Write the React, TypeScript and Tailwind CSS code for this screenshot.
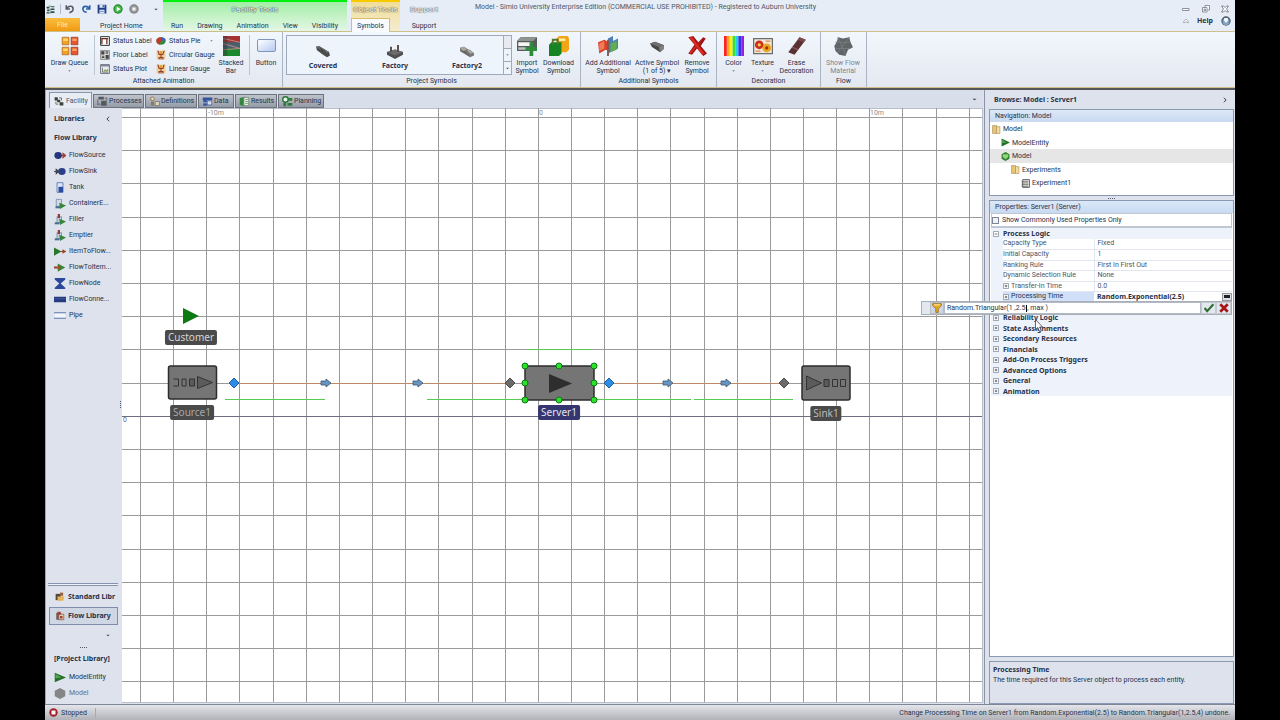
import React from "react";

type Kids = { children?: React.ReactNode };

/* ---------- icons ---------- */

function Ico({ name, className }: { name: string; className?: string }) {
  const art: Record<string, React.ReactNode> = {
    app: <><path d="M1 3h5v3H1zM9 2h6v2H9zM8 6h7v3H8zM2 8h4v3H2zM8 11h7v3H8zM1 13h5v2H1z" fill="#2c4a44" /><path d="M5 2h4M5 9h4M6 14h4" stroke="#4c8a5c" strokeWidth="1.5" /></>,
    undo: <path d="M2 2v6h6M3 7c3-5 10-4 10 1 0 3-3 5-6 6" fill="none" stroke="#555a66" strokeWidth="2.4" />,
    redo: <path d="M14 2v6H8M13 7C10 2 3 3 3 8c0 3 3 5 6 5" fill="none" stroke="#2b62a8" strokeWidth="2.6" />,
    save: <><path d="M1 1h13l1 1v13H1z" fill="#1d3f8c" /><path d="M4 1h8v5H4zM4 9h8v6H4z" fill="#dfe8f7" /><path d="M9 2h2v3H9zM5 11h6v1H5z" fill="#1d3f8c" /></>,
    play: <><circle cx="8" cy="8" r="7.5" fill="#1f8f2a" /><circle cx="8" cy="8" r="5.6" fill="#46b64a" /><path d="M6 4l6 4-6 4z" fill="#fff" /></>,
    stop: <><circle cx="8" cy="8" r="7.5" fill="#808080" /><circle cx="8" cy="8" r="5.6" fill="#9b9b9b" /><path d="M5.500 5.500h5v5h-5z" fill="#f4f4f4" /></>,
    statusLabel: <><path d="M1 1h14v14H1z" fill="#fff" stroke="#333" strokeWidth="1.6" /><path d="M3 3v10M3 4h5M11 3v10M8 4h5" stroke="#6b2b22" strokeWidth="2" /></>,
    floorLabel: <><path d="M1 1h14v14H1z" fill="#d8d8d8" stroke="#555" /><path d="M2 2h5v5H2zM9 8h5v6H9z" fill="#444" /><path d="M9 3h4M9 5h4M3 10h4M3 12h4" stroke="#333" strokeWidth="1.4" /></>,
    statusPlot: <><path d="M1 1h14v14H1z" fill="#e9edf1" stroke="#56606b" strokeWidth="1.4" /><path d="M1 1h14v3H1z" fill="#7b8794" /><path d="M4 6v7h9" stroke="#444" fill="none" /><path d="M5 12l3-4 2 2 3-3v5z" fill="#8aa65a" /></>,
    pie: <><ellipse cx="8" cy="8" rx="7.500" ry="6" fill="#38883c" /><path d="M8 8V2C3 2 0 5 .6 8c0 3 2 5 5 5.800z" fill="#c23a2a" /><path d="M8 8l7.500-1c0-3-4-5-7.500-5z" fill="#3a62b8" /></>,
    gauge: <><path d="M1 1h14v14H1z" fill="#efcf94" /><path d="M3 1l2 6h6l2-6M8 6v9M4 12h8M5 15v-4M11 15v-4" stroke="#93402f" strokeWidth="1.800" fill="none" /><path d="M6 2h4v4H6z" fill="#e79a2d" /></>,
    queue: <><path d="M1 1h6v6H1zM1 9h6v6H1z" fill="#f2a11f" stroke="#a8672a" strokeWidth=".6" /><path d="M9 1h6v6H9zM9 9h6v6H9z" fill="#e8542b" stroke="#8e3323" strokeWidth=".6" /><path d="M2 2h4v2H2zM2 10h4v2H2z" fill="#ffd568" /><path d="M10 2h4v2h-4zM10 10h4v2h-4z" fill="#fb9a62" /></>,
    stacked: <><path d="M0 0h16v6H0z" fill="#a33230" /><path d="M0 5h16v6H0z" fill="#49606d" /><path d="M0 10h16v6H0z" fill="#188a2d" /><path d="M0 2l16 3M0 6l16 4M0 11l16-1" stroke="#c98a86" strokeWidth=".8" /><path d="M0 0h4v16H0z" fill="#303a3f" opacity=".45" /></>,
    covered: <><path d="M1 2l3-1 4 3 6 4 1 4-3 2-4-3-6-5z" fill="#4b4b4b" /><path d="M1 2l3-1 10 7-3 1z" fill="#6f6f6f" /><path d="M5 3l3 4M8 5l3 4" stroke="#333" /></>,
    factory: <><path d="M0 8l8-3 8 3v3l-8 5-8-5z" fill="#4f4f4f" /><path d="M0 8l8-3 8 3-8 4z" fill="#6c6c6c" /><path d="M3 2h2v6H3zM10 0h2v8h-2z" fill="#5e514c" /></>,
    factory2: <><path d="M1 3l4-1 10 7v3l-4 2L1 7z" fill="#777" /><path d="M1 3l4-1 3 3-4 2zM8 6l3-1 4 4-4 1z" fill="#a8a6a0" /><path d="M3 7l3 1 4 4" stroke="#555" fill="none" /></>,
    importS: <><path d="M0 4l3-3h13v8l-3 3H0z" fill="#565c59" /><path d="M0 4l3-3h13l-3 3z" fill="#8d9491" /><path d="M1 5h10v3H1z" fill="#f4f5f4" /><path d="M1 9h6v2H1z" fill="#b9c2bf" /><path d="M10 5h3v4h3v3h-3v4h-3v-4H7V9h3z" fill="#2f8a3c" /></>,
    download: <><path d="M6 2l2-2h7l1 2v9l-2 2H6z" fill="#f3a517" /><path d="M8 2h5v2H8z" fill="#fff1a8" /><path d="M0 7l2-2h8v9l-2 2H0z" fill="#168424" /><path d="M3 7V3h4v4" stroke="#55782e" fill="none" strokeWidth="1.500" /></>,
    addl: <><path d="M8 2l4-2v4l4-2v8l-4 2-4 2z" fill="#4b7fb8" /><path d="M10 6l5-2v7l-5 2z" fill="#62ad50" /><path d="M0 5l5-2 4 2v7l-3-1-5 3z" fill="#d8432c" /><path d="M1 6l4-2v6l-4 2z" fill="#f07b58" /><path d="M8 3v13" stroke="#7a5a50" strokeWidth="1.500" /></>,
    active: <><path d="M1 5l5-2 9 4v4l-4 4L3 9z" fill="#484848" /><path d="M1 5l5-2 9 4-5 2z" fill="#6f6f6f" /><path d="M10 9l5-2v4l-4 4z" fill="#808080" /></>,
    remove: <><path d="M1 1l4-1 4 5 4-4 2 1-4 6 5 6-3 2-5-6-4 5-3-1 5-7z" fill="#9e1515" /><path d="M2 1l2 0 10 13-2 1zM13 2L3 14l-1-1z" fill="#e12a20" /></>,
    color: <><path d="M0 0h2.300v16H0z" fill="#ff2222" /><path d="M2.300 0h2.300v16H2.300z" fill="#ffa51e" /><path d="M4.600 0h2.300v16H4.600z" fill="#fff01f" /><path d="M6.900 0h2.300v16H6.900z" fill="#38e03b" /><path d="M9.200 0h2.300v16H9.200z" fill="#23cdf2" /><path d="M11.500 0h2.300v16h-2.300z" fill="#3333e9" /><path d="M13.800 0H16v16h-2.200z" fill="#9b1be2" /></>,
    texture: <><path d="M.5 2h15v12H.5z" fill="#f2e8de" stroke="#6c6c6c" /><circle cx="5" cy="7" r="3.500" fill="#cc2e1d" /><circle cx="11" cy="9.500" r="3.500" fill="#eba41c" /><circle cx="5" cy="7" r="1.300" fill="#f9d04d" /><circle cx="11" cy="9.500" r="1.300" fill="#a52e17" /><path d="M10 4h4M2 12h4" stroke="#d9884c" /></>,
    erase: <><path d="M10 1l5 2-9 12-5-2z" fill="#593133" /><path d="M10 1l5 2-1.500 2-5-2z" fill="#7c4c4c" /><path d="M4 9l5 2" stroke="#8d5d5d" /></>,
    flow: <><path d="M4 1l4 1 5-1 1 4 2 4-4 2-2 5-5-1-3-3-1-4 2-3z" fill="#626568" /><path d="M2 5l12 0M4 1l6 14M13 1L4 13M2 10h12" stroke="#767a7e" strokeWidth=".8" /></>,
    facility: <><path d="M1 2h5v5H1zM5 6h5v4H5zM9 10h6v5H9z" fill="#3c4238" /><path d="M8 3h4v4M3 9v4h4" stroke="#69705f" fill="none" strokeWidth="1.500" /></>,
    processes: <><path d="M2 1h8v4H2zM6 7h8v7H6z" fill="#545a5e" /><path d="M1 5v7h4M11 3h3v4" stroke="#757b80" fill="none" strokeWidth="2" /></>,
    definitions: <><circle cx="5" cy="4" r="2.600" fill="#f0dcb8" stroke="#8a6a42" strokeWidth="1.200" /><path d="M3 14V8h4v6z" fill="#88785e" /><path d="M9 8h6v6H9z" fill="#ddd6bd" stroke="#6b6b60" /></>,
    data: <><path d="M1 2h14v4H1zM2 6h5v8H2z" fill="#35549b" /><path d="M8 7h6v6H8z" fill="#dce3f3" stroke="#35549b" /><path d="M1 10h13" stroke="#c5d0e8" /></>,
    results: <><path d="M1 3l8-2v14l-8-2z" fill="#328440" /><path d="M7 2h7v12H7z" fill="#e5ece3" stroke="#68806a" /><path d="M9 5h4M9 8h4M9 11h4" stroke="#3b8c46" /></>,
    planning: <><circle cx="5" cy="5" r="4" fill="#eaf4e8" stroke="#257633" strokeWidth="2" /><path d="M9 3h6v4H9zM8 10h7v4H8zM2 10h4v5H2z" fill="#2f7a3d" /></>,
    flowSource: <><path d="M8 8h7M12 5l3.500 3-3.500 3z" fill="#a34234" stroke="#a34234" strokeWidth="1.600" /><circle cx="5.500" cy="8" r="5" fill="#24347e" /></>,
    flowSink: <><path d="M0 8h6M3 5l3.500 3L3 11z" fill="#444" stroke="#444" strokeWidth="1.600" /><circle cx="10.500" cy="8" r="5" fill="#2c3e88" /></>,
    tank: <><path d="M4 1h8v14H4z" fill="#dbe7f7" stroke="#42629b" /><path d="M6 7h6v8H6z" fill="#2b4aa0" /></>,
    container: <><path d="M3 2h7v10H3z" fill="#cfdbe6" stroke="#67819a" /><path d="M7 7l9 4-8 5z" fill="#35853b" /><path d="M2 12h6v3H2z" fill="#4a6b92" /></>,
    filler: <><path d="M4 4h6v9H4z" fill="#c6d3df" stroke="#5f7e9b" /><path d="M5 0h3v6H5z" fill="#8e3f31" /><path d="M7 7l9 4-8 5z" fill="#35853b" /><path d="M1 12h6v3H1z" fill="#4a6b92" /></>,
    itemToFlow: <><path d="M0 2l10 6-10 6z" fill="#2b772c" /><path d="M9 8h6M12 6l3 2-3 2z" fill="#99432b" stroke="#99432b" strokeWidth="1.500" /></>,
    flowToItem: <><path d="M0 8h5" stroke="#93442f" strokeWidth="3" /><path d="M5 2l10 6-10 6z" fill="#3a8533" /><path d="M5 5l4 3-4 3z" fill="#a7452d" /></>,
    flowNode: <path d="M1 0h14v2l-6 6 6 6v2H1v-2l6-6-6-6z" fill="#2b489b" />,
    flowConn: <><path d="M0 4h16v8H0z" fill="#24397f" /><path d="M0 7h16" stroke="#4c64a8" /></>,
    pipe: <><path d="M1 4h14v8H1z" fill="#f2f5fb" /><path d="M0 4h16M0 12h16" stroke="#5c78ab" strokeWidth="1.600" /></>,
    entity: <><path d="M1 1l15 7-15 7z" fill="#24702a" /><path d="M2 3l8 5-8 1z" fill="#57a652" /></>,
    modelGray: <path d="M8 0l7 4v8l-7 4-7-4V4z" fill="#858585" />,
    modelGreen: <><path d="M8 0l7 4v8l-7 4-7-4V4z" fill="#2f7e2f" /><path d="M3 4h10v5l-5 4-5-4z" fill="#8fd678" /></>,
    folder: <><path d="M1 1h7v14H1z" fill="#e9c574" stroke="#a1844a" /><path d="M8 3h6v12H8z" fill="#f5dda0" stroke="#a1844a" /></>,
    experiment: <><path d="M3 1h12v14H3z" fill="#ececec" stroke="#555" strokeWidth="1.500" /><path d="M1 4h12M1 7h12M1 10h12M1 13h12" stroke="#555" strokeWidth="1.300" /></>,
    libStd: <><path d="M1 3h8v10H1z" fill="#57493a" /><path d="M4 7h11l-2 7H4z" fill="#e7b455" /><path d="M8 1h5v5H8z" fill="#995f3f" /></>,
    libFlow: <><path d="M2 3h8v11H2z" fill="#6c5d56" /><path d="M6 5h8v9H6z" fill="#e2cfb5" stroke="#7b4a3a" /><path d="M4 1h5v5H4zM8 8h4v4H8z" fill="#a8402f" /></>,
    stopped: <><circle cx="8" cy="8" r="7.500" fill="#a3202c" /><path d="M4.500 4.500h7v7h-7z" fill="#fff" /></>,
    help: <><circle cx="8" cy="8" r="7.500" fill="#4a5f78" /><circle cx="8" cy="9" r="5.500" fill="#84a3c1" /><path d="M5 3h6v4l-3 4-3-4z" fill="#f4f8fc" /></>,
    funnel: <><path d="M1 1h14v3l-5 5v6H6V9L1 4z" fill="#e9a720" stroke="#936515" strokeWidth="1.200" /><path d="M3 2h10v2H3z" fill="#ffe38a" /></>,
    check: <path d="M1 8l4 5L15 2" stroke="#2f6f31" strokeWidth="3.400" fill="none" />,
    cross: <path d="M2 2l12 12M14 2L2 14" stroke="#a51717" strokeWidth="4.400" fill="none" />,
    min: <path d="M1 7h13v4H1z" fill="#fff" stroke="#6c7480" strokeWidth="1.500" />,
    restore: <path d="M6 5V1h9v9h-4M1 5h9v9H1zM4 8h3v3H4z" fill="#fff" stroke="#6c7480" strokeWidth="1.500" />,
    close: <path d="M1 2h4l3 3 3-3h4l-4 6 4 6h-4l-3-3-3 3H1l4-6z" fill="#fff" stroke="#5c6470" strokeWidth="1.500" />,
    up: <path d="M2 9l6-6 6 6v4l-6-3-6 3z" fill="#fff" stroke="#6c7480" strokeWidth="1.500" />,
    down: <path d="M1 4h14l-7 8z" fill="#3c4656" />,
    left: <path d="M11 2L5 8l6 6" stroke="#2b3b56" strokeWidth="2.600" fill="none" />,
    right: <path d="M5 2l6 6-6 6" stroke="#2b3b56" strokeWidth="2.600" fill="none" />,
  };
  return (
    <svg viewBox="0 0 16 16" preserveAspectRatio="none" aria-hidden="true" className={"shrink-0 " + (className ?? "size-[10px]")}>
      {art[name]}
    </svg>
  );
}

function Grip({ className }: { className: string }) {
  return (
    <div className={"flex items-center justify-center gap-px " + className}>
      {[0, 1, 2, 3].map((i) => <span key={i} className="size-px bg-[#4d586b]" />)}
    </div>
  );
}

/* ---------- title bar ---------- */

function QuickAccess() {
  const items = ["undo", "redo", "save", "play", "stop"];
  return (
    <div className="flex h-[18px] items-center pl-px">
      <Ico name="app" className="size-[9px]" />
      <span className="ml-[5px] h-[10px] w-px bg-[#b3bac6]" />
      <div className="ml-1 flex gap-[6px]">
        {items.map((n) => (
          <button key={n} aria-label={n} className="block"><Ico name={n} /></button>
        ))}
      </div>
      <button aria-label="Customize" className="ml-[15px]"><Ico name="down" className="h-[3px] w-1" /></button>
    </div>
  );
}

function Tab({ children }: Kids) {
  return <button className="h-[14px] leading-4 text-[#26324a]">{children}</button>;
}

function TitleBar() {
  return (
    <header className="flex h-8 border-b border-[#cdbf8a] bg-[#e6edf6]">
      <div className="w-[118px] shrink-0">
        <QuickAccess />
        <div className="flex h-[13px]">
          <button className="h-[13px] w-[35px] bg-linear-to-b from-[#f9bd3c] to-[#f09a10] leading-[14px] text-[#ffe9b0]">File</button>
          <button className="ml-5 h-[14px] w-[42px] text-center leading-4 whitespace-nowrap text-[#26324a]">Project Home</button>
        </div>
      </div>
      <div className="w-[184px] shrink-0 border-t-2 border-[#00f010] bg-linear-to-b from-[#a2eea6] to-[#e4f6e6]">
        <div className="h-4 text-center text-[8px] leading-4 text-white [text-shadow:0_0_1px_#3c5a40,0_0_1px_#3c5a40,0_0_1px_#3c5a40]">Facility Tools</div>
        <div className="flex justify-between pr-[9px] pl-2">
          <Tab>Run</Tab><Tab>Drawing</Tab><Tab>Animation</Tab><Tab>View</Tab><Tab>Visibility</Tab>
        </div>
      </div>
      <div className="ml-1 w-[49px] shrink-0 border-t-2 border-[#f8cb00] bg-linear-to-b from-[#f0dd98] to-[#f4ecd0]">
        <div className="h-4 text-center text-[8px] leading-4 whitespace-nowrap text-white [text-shadow:0_0_1px_#6a5c3a,0_0_1px_#6a5c3a,0_0_1px_#6a5c3a]">Object Tools</div>
        <button className="block h-[14px] w-[39px] border border-b-0 border-[#d9bf62] bg-[#f8fafd] text-[#26324a]">Symbols</button>
      </div>
      <div className="w-12 shrink-0 pt-0.5 text-center">
        <div className="h-4 text-[8px] leading-4 text-white [text-shadow:0_0_1px_#5a6470,0_0_1px_#5a6470,0_0_1px_#5a6470]">Support</div>
        <Tab>Support</Tab>
      </div>
      <h1 className="ml-[27px] flex-1 pt-px leading-3 whitespace-nowrap text-[#4d5768]">
        Model - Simio University Enterprise Edition (COMMERCIAL USE PROHIBITED) - Registered to Auburn University
      </h1>
      <div className="flex w-[60px] shrink-0 flex-col pt-[5px]">
        <div className="flex items-center justify-between pr-[6px] pl-[7px]">
          <button aria-label="Minimize"><Ico name="min" className="size-2" /></button>
          <button aria-label="Restore"><Ico name="restore" className="size-2" /></button>
          <button aria-label="Close"><Ico name="close" className="size-2" /></button>
        </div>
        <div className="mt-[3px] flex items-center justify-between pr-1 pl-2">
          <button aria-label="Collapse ribbon"><Ico name="up" className="size-[6px]" /></button>
          <button className="leading-[10px] font-bold text-[#24344f]">Help</button>
          <Ico name="help" />
        </div>
      </div>
    </header>
  );
}

/* ---------- ribbon ---------- */

function Group({ title, width, children }: Kids & { title: string; width: string }) {
  return (
    <section className={"flex shrink-0 flex-col border-r border-[#a9b3c2] " + width}>
      <div className="flex h-[45px]">{children}</div>
      <h2 className="text-center leading-[11px] text-[#26324a]">{title}</h2>
    </section>
  );
}

function Big({ icon, lines, width, arrow, dim, iconClass }: { icon: string; lines: string[]; width: string; arrow?: boolean; dim?: boolean; iconClass?: string }) {
  return (
    <button className={"flex shrink-0 flex-col items-center pt-1 leading-2 whitespace-nowrap " + width + (dim ? " text-[#7d8590]" : " text-[#26324a]")}>
      <span className="mb-[3px] flex h-5 items-center"><Ico name={icon} className={iconClass ?? "size-5"} /></span>
      {lines.map((l) => <span key={l}>{l}</span>)}
      {arrow && <Ico name="down" className="mt-[3px] h-[2px] w-[3px]" />}
    </button>
  );
}

function Small({ icon, label, arrow }: { icon: string; label: string; arrow?: boolean }) {
  return (
    <button className="flex h-[14px] items-center gap-[3px] whitespace-nowrap text-[#26324a]">
      <Ico name={icon} />{label}
      {arrow && <Ico name="down" className="ml-[6px] h-[2px] w-[3px]" />}
    </button>
  );
}

function Ribbon() {
  return (
    <div className="border-b-2 border-[#55565a]">
      <div className="flex h-14 overflow-hidden border-b border-[#cdbf8a] bg-linear-to-b from-[#f2f7fd] to-[#e3e8f1]">
        <Group title="Attached Animation" width="w-[238px]">
          <Big icon="queue" lines={["Draw Queue"]} width="w-[49px]" arrow iconClass="h-5 w-[18px]" />
          <span className="mt-[3px] h-10 w-px bg-[#bcc5d2]" />
          <div className="ml-[5px] w-[56px] pt-0.5">
            <Small icon="statusLabel" label="Status Label" />
            <Small icon="floorLabel" label="Floor Label" />
            <Small icon="statusPlot" label="Status Plot" />
          </div>
          <div className="w-[60px] pt-0.5">
            <Small icon="pie" label="Status Pie" arrow />
            <Small icon="gauge" label="Circular Gauge" />
            <Small icon="gauge" label="Linear Gauge" />
          </div>
          <Big icon="stacked" lines={["Stacked", "Bar"]} width="w-[30px]" iconClass="h-5 w-[17px]" />
          <span className="mt-[3px] ml-[3px] h-10 w-px bg-[#bcc5d2]" />
          <button className="flex w-8 flex-col items-center pt-[7px] leading-2 text-[#26324a]">
            <span className="mb-[7px] h-[13px] w-[19px] rounded-xs border border-[#7f93bd] bg-linear-to-br from-white to-[#b5c9f0]" />
            Button
          </button>
        </Group>
        <Group title="Project Symbols" width="w-[298px]">
          <div className="mt-[3px] ml-[3px] flex h-10 w-[226px] shrink-0 border border-[#9eaabb] bg-[#eef4fb]">
            {[["covered", "Covered"], ["factory", "Factory"], ["factory2", "Factory2"]].map(([i, l]) => (
              <button key={l} className="flex flex-1 flex-col items-center pt-[9px] font-bold text-[#26324a]">
                <Ico name={i} className="mb-[3px] h-[14px] w-4" />
                <span className="leading-2">{l}</span>
              </button>
            ))}
            <div className="flex w-2 flex-col border-l border-[#9eaabb]">
              <button aria-label="Scroll up" className="flex-1 bg-[#e7ebf1]" />
              <button aria-label="Scroll down" className="flex flex-1 items-center justify-center border-y border-[#9eaabb]"><Ico name="down" className="h-[2px] w-[3px]" /></button>
              <button aria-label="More" className="flex flex-1 items-center justify-center"><Ico name="down" className="h-[3px] w-[3px]" /></button>
            </div>
          </div>
          <Big icon="importS" lines={["Import", "Symbol"]} width="w-[30px]" />
          <Big icon="download" lines={["Download", "Symbol"]} width="w-[33px]" />
        </Group>
        <Group title="Additional Symbols" width="w-[136px]">
          <Big icon="addl" lines={["Add Additional", "Symbol"]} width="w-[54px]" />
          <Big icon="active" lines={["Active Symbol", "(1 of 5) ▾"]} width="w-[44px]" iconClass="h-[14px] w-4" />
          <Big icon="remove" lines={["Remove", "Symbol"]} width="w-[36px]" />
        </Group>
        <Group title="Decoration" width="w-[104px]">
          <Big icon="color" lines={["Color"]} width="w-[33px]" arrow />
          <Big icon="texture" lines={["Texture"]} width="w-[25px]" arrow />
          <Big icon="erase" lines={["Erase", "Decoration"]} width="w-[43px]" />
        </Group>
        <Group title="Flow" width="w-[46px]">
          <Big icon="flow" lines={["Show Flow", "Material"]} width="w-[44px]" dim />
        </Group>
      </div>
    </div>
  );
}

/* ---------- library panel ---------- */

const library: [string, string][] = [
  ["flowSource", "FlowSource"], ["flowSink", "FlowSink"], ["tank", "Tank"], ["container", "ContainerE..."],
  ["filler", "Filler"], ["filler", "Emptier"], ["itemToFlow", "ItemToFlow..."], ["flowToItem", "FlowToItem..."],
  ["flowNode", "FlowNode"], ["flowConn", "FlowConne..."], ["pipe", "Pipe"],
];

function LibraryItem({ icon, label, dim }: { icon: string; label: string; dim?: boolean }) {
  return (
    <li className={"flex h-4 items-center gap-[3px] whitespace-nowrap " + (dim ? "text-[#666f7d]" : "")}>
      <Ico name={icon} className="h-[11px] w-3" />{label}
    </li>
  );
}

function LibraryPanel() {
  return (
    <aside className="flex w-[74px] shrink-0 flex-col bg-[#dde2ed] pr-1 text-[#26324a]">
      <div className="flex h-[21px] items-center justify-between pr-[7px] pl-[6px] font-bold">Libraries<Ico name="left" className="size-[6px]" /></div>
      <h2 className="pl-[6px] leading-[18px] font-bold">Flow Library</h2>
      <ul className="pl-[6px]">
        {library.map(([i, l]) => <LibraryItem key={l} icon={i} label={l} />)}
      </ul>
      <div className="relative min-h-4 flex-1">
        <Grip className="absolute -right-[3px] bottom-[175px] flex-col" />
      </div>
      <div className="h-[3px] border-y border-[#8594ae] bg-[#eef1f7]" />
      <button className="mt-[2px] ml-px flex h-[17px] items-center gap-[3px] overflow-hidden pl-[6px] font-bold whitespace-nowrap"><Ico name="libStd" />Standard Libr</button>
      <button className="mt-[2px] ml-px flex h-[18px] items-center gap-[3px] border border-[#7f8fab] bg-[#cfd7e5] pl-[5px] font-bold whitespace-nowrap"><Ico name="libFlow" />Flow Library</button>
      <div className="flex h-5 items-center justify-end pr-2"><Ico name="down" className="h-[3px] w-1" /></div>
      <Grip className="h-1" />
      <h2 className="pl-[6px] leading-5 font-bold">[Project Library]</h2>
      <ul className="pl-[6px] pb-0.5">
        <LibraryItem icon="entity" label="ModelEntity" />
        <LibraryItem icon="modelGray" label="Model" dim />
      </ul>
    </aside>
  );
}

/* ---------- facility canvas ---------- */

const columns = Array.from({ length: 60 }, (_, i) => Math.round(18 + i * 33.15));
const rows = Array.from({ length: 40 }, (_, i) => Math.round(9 + i * 33.2));
const handles = [[403, 258], [437, 258], [472, 258], [403, 275], [472, 275], [403, 292], [437, 292], [472, 292]];

function Diamond({ x, fill, edge }: { x: number; fill: string; edge: string }) {
  return <path d={`M${x} 270l5 5-5 5-5-5z`} fill={fill} stroke={edge} />;
}

function Arrow({ x }: { x: number }) {
  return <path d={`M${x} 273h5v-2l5 4-5 4v-2h-5z`} fill="#6796c2" stroke="#3d5670" strokeWidth=".8" />;
}

function NodeLabel({ place, children }: Kids & { place: string }) {
  return <span className={"absolute -translate-x-1/2 rounded-xs px-[3px] font-['Noto_Sans',sans-serif] text-[10px] leading-[15px] " + place}>{children}</span>;
}

function Canvas() {
  return (
    <div className="relative min-w-0 flex-1 overflow-hidden border-r border-b border-[#b7bdc9] bg-white">
      <svg className="absolute inset-0 h-full w-full" aria-hidden="true">
        <g stroke="#9a9a9a" shapeRendering="crispEdges">
          <line x1="0" x2="100%" y1="0.500" y2="0.500" stroke="#b7bdc9" />
          {columns.map((x) => <line key={x} x1={x + 0.5} x2={x + 0.5} y1="0" y2="100%" />)}
          {rows.map((y) => <line key={y} y1={y + 0.5} y2={y + 0.5} x1="0" x2="100%" />)}
          <line x1="0" x2="100%" y1="308.500" y2="308.500" stroke="#6d6d80" />
        </g>
        <path d="M112 275h276v1H112zM487 275h175v1H487z" fill="#bf8a68" />
        <path d="M103 291h100v1H103zM305 291h97v1h-97zM472 291h97v1h-97zM572 291h99v1h-99zM405 241h65v1h-65z" fill="#55cc55" />
        <path d="M61 200l16 8-16 8z" fill="#0c7a12" />
        <g stroke="#2d2d2d" strokeWidth="1.500">
          <rect x="46.500" y="258" width="48" height="33" rx="2" fill="#757575" />
          <rect x="403" y="258" width="69" height="34" fill="#757575" />
          <rect x="680" y="258" width="48" height="34" rx="2" fill="#757575" />
        </g>
        <g fill="#5b5b5b" stroke="#333">
          <path d="M51.500 271h5v7h-5M60 271h4v7h-4z" fill="none" />
          <path d="M67.500 271h5v7h-5zM75.500 268.500l15 6-15 6z" />
          <path d="M684.500 268l15 7-15 7zM702 271.500h5v7h-5z" />
          <path d="M710.500 271.500h5v7h-5zM718.500 271.500h5v7h-5z" fill="none" />
        </g>
        <path d="M427 266l23 9.500-23 9.500z" fill="#2e2e2e" />
        {handles.map(([x, y]) => <circle key={`${x}-${y}`} cx={x} cy={y} r="3" fill="#2be22b" stroke="#0c7a12" />)}
        <Diamond x={112} fill="#2e8be6" edge="#1c5ea8" />
        <Diamond x={388} fill="#6b6b6b" edge="#4c4c4c" />
        <Diamond x={487} fill="#2e8be6" edge="#1c5ea8" />
        <Diamond x={662} fill="#6b6b6b" edge="#4c4c4c" />
        <Arrow x={199} /><Arrow x={291} /><Arrow x={541} /><Arrow x={599} />
      </svg>
      <span className="absolute top-px left-[86px] leading-2 text-[#8b8b8b]">-10m</span>
      <span className="absolute top-px left-[417px] leading-2 text-[#8b8b8b]">0</span>
      <span className="absolute top-px left-[748px] leading-2 text-[#8b8b8b]">10m</span>
      <span className="absolute top-[308px] left-px leading-2 text-[#6b6b6b]">0</span>
      <NodeLabel place="left-[69px] top-[222px] bg-[#4a4a4a] text-[#d6d6d6]">Customer</NodeLabel>
      <NodeLabel place="left-[70px] top-[297px] bg-[#4a4a4a] text-[#a8a8a8]">Source1</NodeLabel>
      <NodeLabel place="left-[437px] top-[297px] bg-[#35356f] text-[#e4e4f2]">Server1</NodeLabel>
      <NodeLabel place="left-[704px] top-[298px] bg-[#4a4a4a] text-[#bdbdbd]">Sink1</NodeLabel>
    </div>
  );
}

function DocumentTabs() {
  const tabs = [
    ["processes", "Processes", "w-[51px]"], ["definitions", "Definitions", "w-[52px]"], ["data", "Data", "w-[36px]"],
    ["results", "Results", "w-[42px]"], ["planning", "Planning", "w-[46px]"],
  ];
  return (
    <nav className="flex h-[18px] items-end gap-px bg-[#d9dfea] pl-px text-[#26324a]">
      <button className="flex h-4 w-[43px] items-center gap-[2px] border border-b-0 border-[#8995a9] bg-[#e8edf5] pl-1 text-[#4b566a]"><Ico name="facility" />Facility</button>
      {tabs.map(([i, l, w]) => (
        <button key={l} className={"flex h-[14px] items-center gap-px border border-[#6d7480] bg-linear-to-b from-[#bfc4cc] to-[#969ca6] pl-[3px] " + w}><Ico name={i} className="size-[11px]" />{l}</button>
      ))}
      <button aria-label="Tab list" className="mr-[6px] mb-[7px] ml-auto"><Ico name="down" className="h-[3px] w-[5px]" /></button>
    </nav>
  );
}

/* ---------- browse panel ---------- */

const tree: [string, string, string][] = [
  ["folder", "Model", "pl-[2px]"], ["entity", "ModelEntity", "pl-[11px]"], ["modelGreen", "Model", "pl-[11px]"],
  ["folder", "Experiments", "pl-[21px]"], ["experiment", "Experiment1", "pl-[31px]"],
];

function Expander({ open }: { open?: boolean }) {
  return (
    <svg viewBox="0 0 7 7" className="size-[6px] shrink-0" aria-hidden="true">
      <path d="M.5.5h6v6h-6z" fill="#fff" stroke="#8893a5" />
      <path d={open ? "M2 3.500h3" : "M2 3.500h3M3.500 2v3"} stroke="#333" strokeWidth=".8" />
    </svg>
  );
}

function Section({ title, open }: { title: string; open?: boolean }) {
  return (
    <tr className="bg-[#eef3fb] odd:h-[11px] even:h-[10px]">
      <td className="p-0 pl-[2px]"><Expander open={open} /></td>
      <th colSpan={2} scope="colgroup" className="p-0 text-left font-bold">{title}</th>
    </tr>
  );
}

function Prop({ name, value, nested }: { name: string; value: string; nested?: boolean }) {
  return (
    <tr className="odd:h-[11px] even:h-[10px]">
      <td className="bg-[#eef3fb] p-0" />
      <th scope="row" className="border-b border-[#e2e6ee] p-0 text-left font-normal text-[#4a5568]">
        <span className="flex items-center gap-[2px]">{nested && <Expander />}{name}</span>
      </th>
      <td className="border-b border-l border-[#e2e6ee] p-0 pl-[3px] text-[#4a5568]">{value}</td>
    </tr>
  );
}

function ValueEditor() {
  return (
    <div className="absolute top-full right-0 z-10 flex h-[14px] w-[311px] items-stretch border border-[#a9afb9] bg-[#e3e7ee]">
      <button aria-label="Expression builder" className="ml-2 flex w-[14px] items-center justify-center border border-[#b8bec8] bg-[#ccd6e6]"><Ico name="funnel" /></button>
      <div className="relative flex flex-1">
        <input aria-label="Processing Time value" defaultValue="Random.Triangular(1 ,2.5 , max )" className="w-full border border-[#b3bac6] bg-white px-[2px] font-[Roboto,sans-serif] font-normal text-[#26324a] outline-none" />
        <span className="absolute top-[3px] left-[82px] h-[7px] w-px bg-black" />
      </div>
      <button aria-label="Accept" className="flex w-[15px] items-center justify-center border border-[#c5cad3]"><Ico name="check" /></button>
      <button aria-label="Cancel" className="flex w-[15px] items-center justify-center border border-[#c5cad3]"><Ico name="cross" /></button>
      <svg viewBox="0 0 8 13" className="absolute top-[17px] left-[113px] h-[13px] w-2" aria-hidden="true">
        <path d="M.5.5v10l2.300-2 1.700 4 1.800-.8-1.700-3.700h3z" fill="#fff" stroke="#444" strokeWidth=".8" />
      </svg>
    </div>
  );
}

const closedSections = ["Reliability Logic", "State Assignments", "Secondary Resources", "Financials", "Add-On Process Triggers", "Advanced Options", "General", "Animation"];

function PropertyGrid() {
  return (
    <table className="w-full table-fixed border-collapse leading-[9px] text-[#26324a]">
      <colgroup><col className="w-3" /><col className="w-[91px]" /><col /></colgroup>
      <tbody>
        <Section title="Process Logic" open />
        <Prop name="Capacity Type" value="Fixed" />
        <Prop name="Initial Capacity" value="1" />
        <Prop name="Ranking Rule" value="First In First Out" />
        <Prop name="Dynamic Selection Rule" value="None" />
        <Prop name="Transfer-In Time" value="0.0" nested />
        <tr className="h-[11px]">
          <td className="bg-[#eef3fb] p-0" />
          <th scope="row" className="bg-[#cfe0f8] p-0 text-left font-normal"><span className="flex items-center gap-[2px]"><Expander />Processing Time</span></th>
          <td className="p-0 pl-[3px] font-bold">
            <div className="relative flex items-center justify-between">
              Random.Exponential(2.5)
              <button aria-label="Edit" className="flex h-2 w-[10px] items-center justify-center border border-[#999] bg-[#dcdfe5]"><span className="h-[3px] w-[6px] bg-[#222]" /></button>
              <ValueEditor />
            </div>
          </td>
        </tr>
        <tr className="h-[10px]"><td colSpan={3} className="p-0" /></tr>
        {closedSections.map((s) => <Section key={s} title={s} />)}
      </tbody>
    </table>
  );
}

function BrowsePanel() {
  return (
    <aside className="flex w-[251px] shrink-0 flex-col border-l border-[#8a94a6] bg-[#dde2ed] pr-px pl-1 text-[#26324a]">
      <div className="flex h-[19px] items-center justify-between pr-[6px] pl-[5px] font-bold">Browse: Model : Server1<Ico name="right" className="size-[6px]" /></div>
      <section className="h-[87px] border border-[#8a99b2] bg-white">
        <h2 className="h-3 bg-linear-to-b from-[#dce8f8] to-[#c8daf1] pl-[5px] leading-3">Navigation: Model</h2>
        <ul>
          {tree.map(([i, l, pad], k) => (
            <li key={k} className={"flex items-center gap-[2px] odd:h-[14px] even:h-[13px] " + pad + (k === 2 ? " bg-[#e6e6e6]" : "")}>
              <Ico name={i} className="size-[9px]" />{l}
            </li>
          ))}
        </ul>
      </section>
      <Grip className="h-1" />
      <section className="flex flex-1 flex-col border border-[#8a99b2] bg-white">
        <h2 className="h-3 bg-linear-to-b from-[#dce8f8] to-[#c8daf1] pl-[5px] leading-3">Properties: Server1 (Server)</h2>
        <label className="mx-px flex h-[14px] items-center gap-[3px] border border-[#c0c7d2]">
          <input type="checkbox" className="size-[7px] appearance-none border border-[#7d8797] bg-[#f2f2f2]" />
          Show Commonly Used Properties Only
        </label>
        <div className="mx-px border-t border-[#c0c7d2]"><PropertyGrid /></div>
      </section>
      <section className="mt-1 h-[43px] border border-[#8a99b2] px-[3px] pt-[3px]">
        <h2 className="leading-[10px] font-bold">Processing Time</h2>
        <p className="leading-[10px]">The time required for this Server object to process each entity.</p>
      </section>
    </aside>
  );
}

export default function App() {
  return (
    <div className="flex min-h-screen bg-black px-[45px] font-[Roboto,sans-serif] text-[7px] leading-[10px] [&_.font-bold]:font-['Noto_Sans',sans-serif]">
      <div className="flex min-w-0 flex-1 flex-col bg-[#dde2ed]">
        <TitleBar />
        <Ribbon />
        <main className="flex flex-1 border-b border-[#7d8797]">
          <div className="flex min-w-0 flex-1 flex-col border-l border-[#9aa5b8] pb-px pl-[2px]">
            <DocumentTabs />
            <div className="flex flex-1">
              <LibraryPanel />
              <Canvas />
            </div>
          </div>
          <div className="w-px" />
          <BrowsePanel />
        </main>
        <footer className="flex h-[15px] items-center bg-linear-to-b from-[#e4e6ec] to-[#b0b2b8] pr-[5px] pl-1 text-[#26324a]">
          <Ico name="stopped" className="size-[9px]" />
          <span className="ml-[3px] border-r border-[#a5aab3] pr-2">Stopped</span>
          <span className="ml-auto">Change Processing Time on Server1 from Random.Exponential(2.5) to Random.Triangular(1,2.5,4) undone.</span>
        </footer>
      </div>
    </div>
  );
}
